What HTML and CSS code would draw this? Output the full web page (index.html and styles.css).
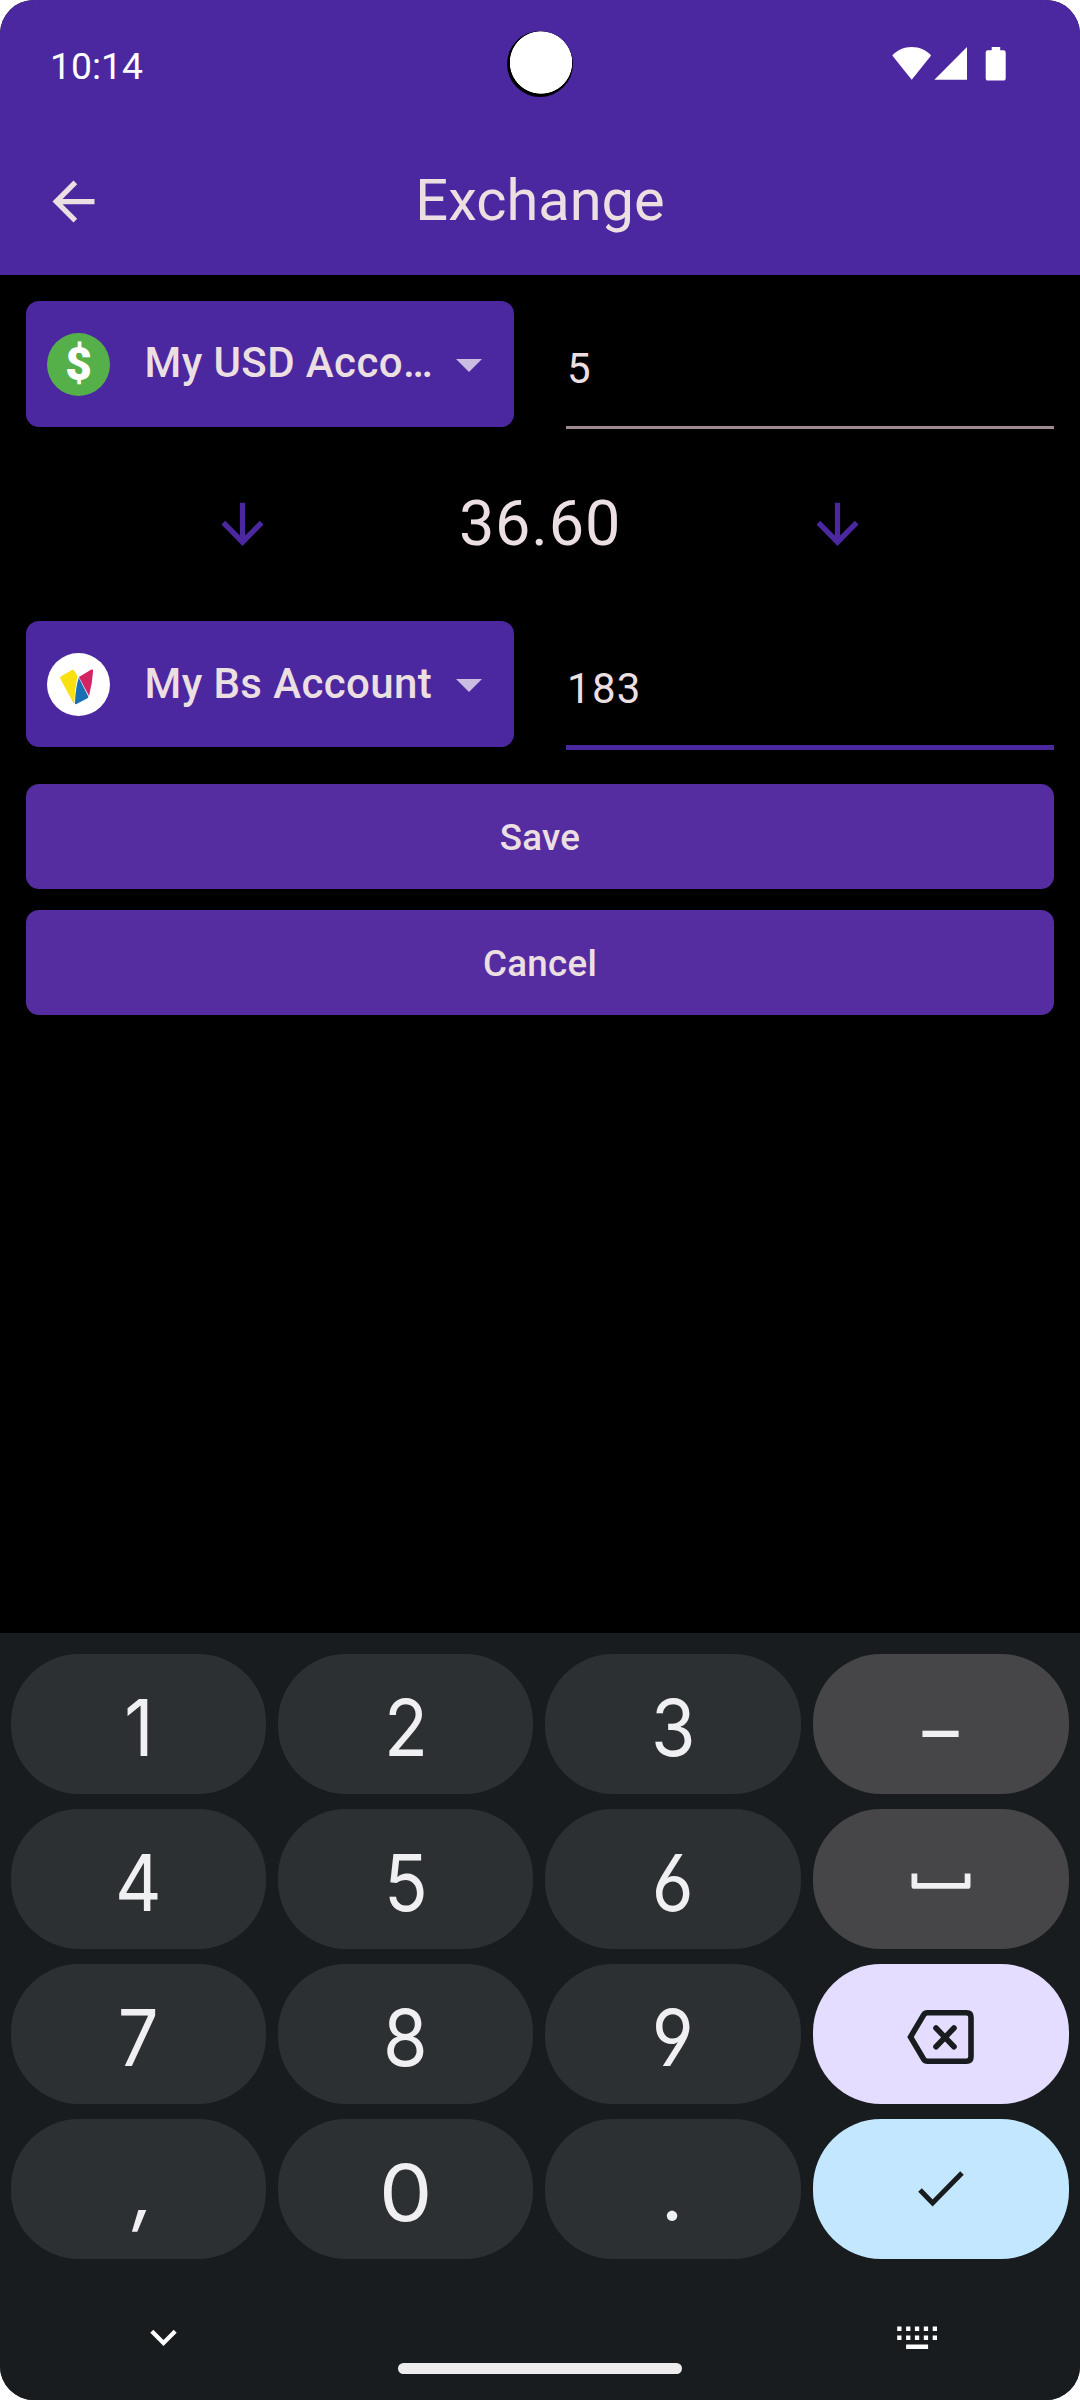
FILE: index.html
```
<!DOCTYPE html>
<html lang="en">
<head>
<meta charset="utf-8">
<title>Exchange</title>
<link rel="stylesheet" href="styles.css">
</head>
<body>
<div class="phone">
  <header class="top">
    <div class="status">
      <span class="clock">10:14</span>
      <svg class="status-icons" width="115" height="36" viewBox="0 0 115 36" fill="#fff">
        <path d="M19.700 33.800 0.300 9.600C5 4 11.800 1 19.700 1S34.400 4 39.100 9.600Z"/>
        <path d="M75 1V33.800H42.400Z"/>
        <path d="M99.700 1h8.500v3.200h3.300q2.200 0 2.200 2.200v26q0 2.200-2.200 2.200H95.900q-2.200 0-2.200-2.200v-26q0-2.200 2.200-2.200h3.800z"/>
      </svg>
      <span class="camera"></span>
    </div>
    <div class="appbar">
      <svg class="icon" viewBox="0 0 24 24" fill="#ecdfe2"><path d="M20 11H7.830l5.590-5.590L12 4l-8 8 8 8 1.410-1.410L7.830 13H20v-2z"/></svg>
      <h1>Exchange</h1>
    </div>
  </header>

  <main class="form">
    <div class="row">
      <div class="select">
        <span class="coin usd">$</span>
        <span class="name">My USD Acco…</span>
        <svg class="caret" viewBox="0 0 26 13"><path d="M0 0h26L13 13z"/></svg>
      </div>
      <div class="field">5</div>
    </div>
    <div class="rate">
      <svg class="icon" viewBox="0 0 24 24" fill="#4b27a0"><path d="M20 12l-1.410-1.410L13 16.170V3.700h-2v12.470l-5.580-5.590L4 12l8 8.200 8-8.200z"/></svg>
      <span>36.60</span>
      <svg class="icon" viewBox="0 0 24 24" fill="#4b27a0"><path d="M20 12l-1.410-1.410L13 16.170V3.700h-2v12.470l-5.580-5.590L4 12l8 8.200 8-8.200z"/></svg>
    </div>
    <div class="row">
      <div class="select">
        <span class="coin bs">
          <svg viewBox="0 0 63 63">
            <path fill="#f9e010" d="M13.700 23.400 24.500 17.200Q26.300 16.300 27.300 17.800L29.900 21.700Q31 23.500 29.800 26.500Q27.800 38 27.100 51.200L13.200 25.500Q12.700 24 13.700 23.400Z"/>
            <path fill="#1a70b7" d="M31.700 24.600 41.300 43.600Q41.300 44.800 40.500 45.200L29.500 51.100Q27.900 51.700 27.900 50Q28.500 35.500 31.700 24.600Z"/>
            <path fill="#d52464" d="M31.900 23.900 44.400 16.600Q46.100 15.900 46.100 17.700Q45.400 30.500 42 42.900Z"/>
          </svg>
        </span>
        <span class="name lower">My Bs Account</span>
        <svg class="caret" viewBox="0 0 26 13"><path d="M0 0h26L13 13z"/></svg>
      </div>
      <div class="field active">183</div>
    </div>
    <div class="actions">
      <button>Save</button>
      <button>Cancel</button>
    </div>
  </main>

  <section class="keyboard">
    <div class="keys">
      <div class="key"><span>1</span></div>
      <div class="key"><span>2</span></div>
      <div class="key"><span>3</span></div>
      <div class="key fn low"><span>–</span></div>
      <div class="key"><span>4</span></div>
      <div class="key"><span>5</span></div>
      <div class="key"><span class="straight">6</span></div>
      <div class="key fn glyph"><svg class="space" width="60" height="18" viewBox="0 0 60 18" fill="none" stroke="#f0eff2" stroke-width="5.800" stroke-linejoin="round"><path d="M3.400 1.500V13.900H56.600V1.500"/></svg></div>
      <div class="key"><span>7</span></div>
      <div class="key"><span>8</span></div>
      <div class="key"><span class="straight">9</span></div>
      <div class="key delete glyph"><svg class="backspace" width="68" height="54" viewBox="0 0 68 54" fill="none" stroke="#191c1e" stroke-width="5.600"><path d="M20.500 2.800H59.500Q64 2.800 64 7.300V46.700Q64 51.200 59.500 51.200H20.500Q18 51.200 16.700 49.200L3.500 27 16.700 4.800Q18 2.800 20.500 2.800Z"/><path d="M29 18 47 36.800M47 18 29 36.800" stroke-linecap="round"/></svg></div>
      <div class="key"><span class="comma">,</span></div>
      <div class="key"><span class="zero">0</span></div>
      <div class="key"><span class="period">.</span></div>
      <div class="key enter glyph"><svg class="check" width="46" height="36" viewBox="0 0 46 36" fill="none" stroke="#191c1e" stroke-width="5"><path d="M2 19 14.600 32 44 2"/></svg></div>
    </div>
    <div class="nav">
      <svg class="collapse" width="27" height="18" viewBox="0 0 27 18" fill="none" stroke="#fff" stroke-width="4.200"><path d="M1.800 2.200 13.500 14 25.200 2.200"/></svg>
      <span class="home"></span>
      <svg class="switch" width="41" height="24" viewBox="0 0 41 24" fill="#fff"><path d="M.2.500h4.300v4.500H.2zM9.100.500h4.300v4.500H9.100zM17.900.500h4.300v4.500h-4.300zM26.800.500h4.300v4.500h-4.300zM35.700.500h4.300v4.500h-4.300zM.2 9.500h4.300V14H.2zM9.100 9.500h4.300V14H9.100zM17.900 9.500h4.300V14h-4.300zM26.800 9.500h4.300V14h-4.300zM35.700 9.500h4.300V14h-4.300zM9.100 18.600h22v4.400h-22z"/></svg>
    </div>
  </section>
</div>
</body>
</html>
```
FILE: styles.css
```
* { box-sizing: border-box; }

body {
  margin: 0;
  background: #fff;
  font-family: Roboto, "Liberation Sans", sans-serif;
  color: #ecdfe2;
}

svg { display: block; flex: none; }

.phone {
  width: 1080px;
  height: 2400px;
  display: flex;
  flex-direction: column;
  background: #000;
  border-radius: 34px;
  overflow: hidden;
}

.top {
  height: 275px;
  background: #4b27a0;
}

.status {
  position: relative;
  height: 128px;
  padding: 46px 73px 0 50px;
  display: flex;
  justify-content: space-between;
  align-items: flex-start;
}

.clock {
  color: #fff;
  font-size: 37.300px;
  line-height: 40px;
}

.camera {
  position: absolute;
  left: 507px;
  top: 31px;
  width: 66px;
  height: 66px;
  border-radius: 50%;
  background: radial-gradient(circle at 34px 31.500px, #fff 30.800px, #000 31.500px);
}

.appbar {
  height: 147px;
  padding: 0 42px;
  display: grid;
  grid-template-columns: 63px 1fr 63px;
  align-items: center;
}

.icon { width: 63px; height: 63px; }

h1 {
  margin: 0;
  padding-bottom: 3px;
  text-align: center;
  font-size: 57.750px;
  font-weight: 400;
  line-height: 70px;
}

.form {
  height: 1358px;
  padding: 26px 26px 0;
}

.row {
  display: grid;
  grid-template-columns: 488px 488px;
  column-gap: 52px;
}

.select {
  height: 126px;
  padding: 0 32px 0 21px;
  display: flex;
  align-items: center;
  background: #4b27a0;
  border-radius: 13px;
}

.coin {
  width: 63px;
  height: 63px;
  border-radius: 50%;
  flex: none;
}

.usd {
  background: #56b04a;
  color: #fff;
  text-align: center;
  font-size: 46px;
  font-weight: 900;
  line-height: 63px;
}

.bs { background: #fff; }

.name {
  flex: 1;
  padding: 0 0 2px 34.500px;
  font-size: 42px;
  font-weight: 500;
  line-height: 56px;
  letter-spacing: .400px;
  white-space: nowrap;
}

.lower { padding-bottom: 0; }

.caret {
  width: 26px;
  height: 13px;
  margin-top: 3px;
  fill: #cbbde2;
}

.field {
  height: 128px;
  padding: 40px 0 0 1px;
  border-bottom: 3px solid #9f8a8f;
  font-size: 42px;
  line-height: 56px;
  letter-spacing: 1.300px;
}

.active {
  height: 129px;
  border-bottom: 5px solid #4b27a0;
}

.rate {
  height: 192px;
  padding-bottom: 2px;
  display: flex;
  justify-content: space-evenly;
  align-items: center;
  font-size: 63px;
  line-height: 74px;
  letter-spacing: .800px;
}

.actions {
  display: grid;
  gap: 21px;
  margin-top: 34px;
}

button {
  height: 105px;
  padding: 2px 0 0;
  border: 0;
  border-radius: 13px;
  background: #552da1;
  color: inherit;
  font-family: inherit;
  font-size: 36.750px;
  font-weight: 500;
  letter-spacing: .260px;
}

.keyboard {
  flex: 1;
  background: #191c1e;
  padding: 21px 11px 0;
}

.keys {
  display: grid;
  grid-template-columns: 255px 255px 256px 256px;
  gap: 15px 12px;
}

.key {
  height: 140px;
  padding-top: 7px;
  display: flex;
  justify-content: center;
  align-items: center;
  border-radius: 68px;
  background: #2d3033;
  color: #f0eff2;
  font-family: Inter, sans-serif;
  font-size: 78.400px;
  line-height: 133px;
}

.key span { transform: scaleX(.92); }
.key .zero { transform: scaleX(1.080); }
.key .comma { transform: translate(6px, -3px) skewX(-8deg); }
.key .period { transform: translateX(-1px); }
.straight { font-feature-settings: "ss01"; }
.fn { background: #464648; }
.low { padding-top: 11px; }
.delete { background: #e5ddff; }
.enter { background: #c2e7ff; }
.glyph { padding-top: 0; }
.space { margin-top: 4px; }
.backspace { margin-top: 5px; }

.nav {
  height: 141px;
  display: grid;
  grid-template-columns: 304px 450px 304px;
  justify-items: center;
  align-items: start;
  padding-top: 67px;
}

.collapse { margin-top: 3px; }
.switch { margin: 0 0 0 1px; }

.home {
  width: 284px;
  height: 11px;
  margin-top: 37px;
  border-radius: 5.500px;
  background: #ececec;
}
```
